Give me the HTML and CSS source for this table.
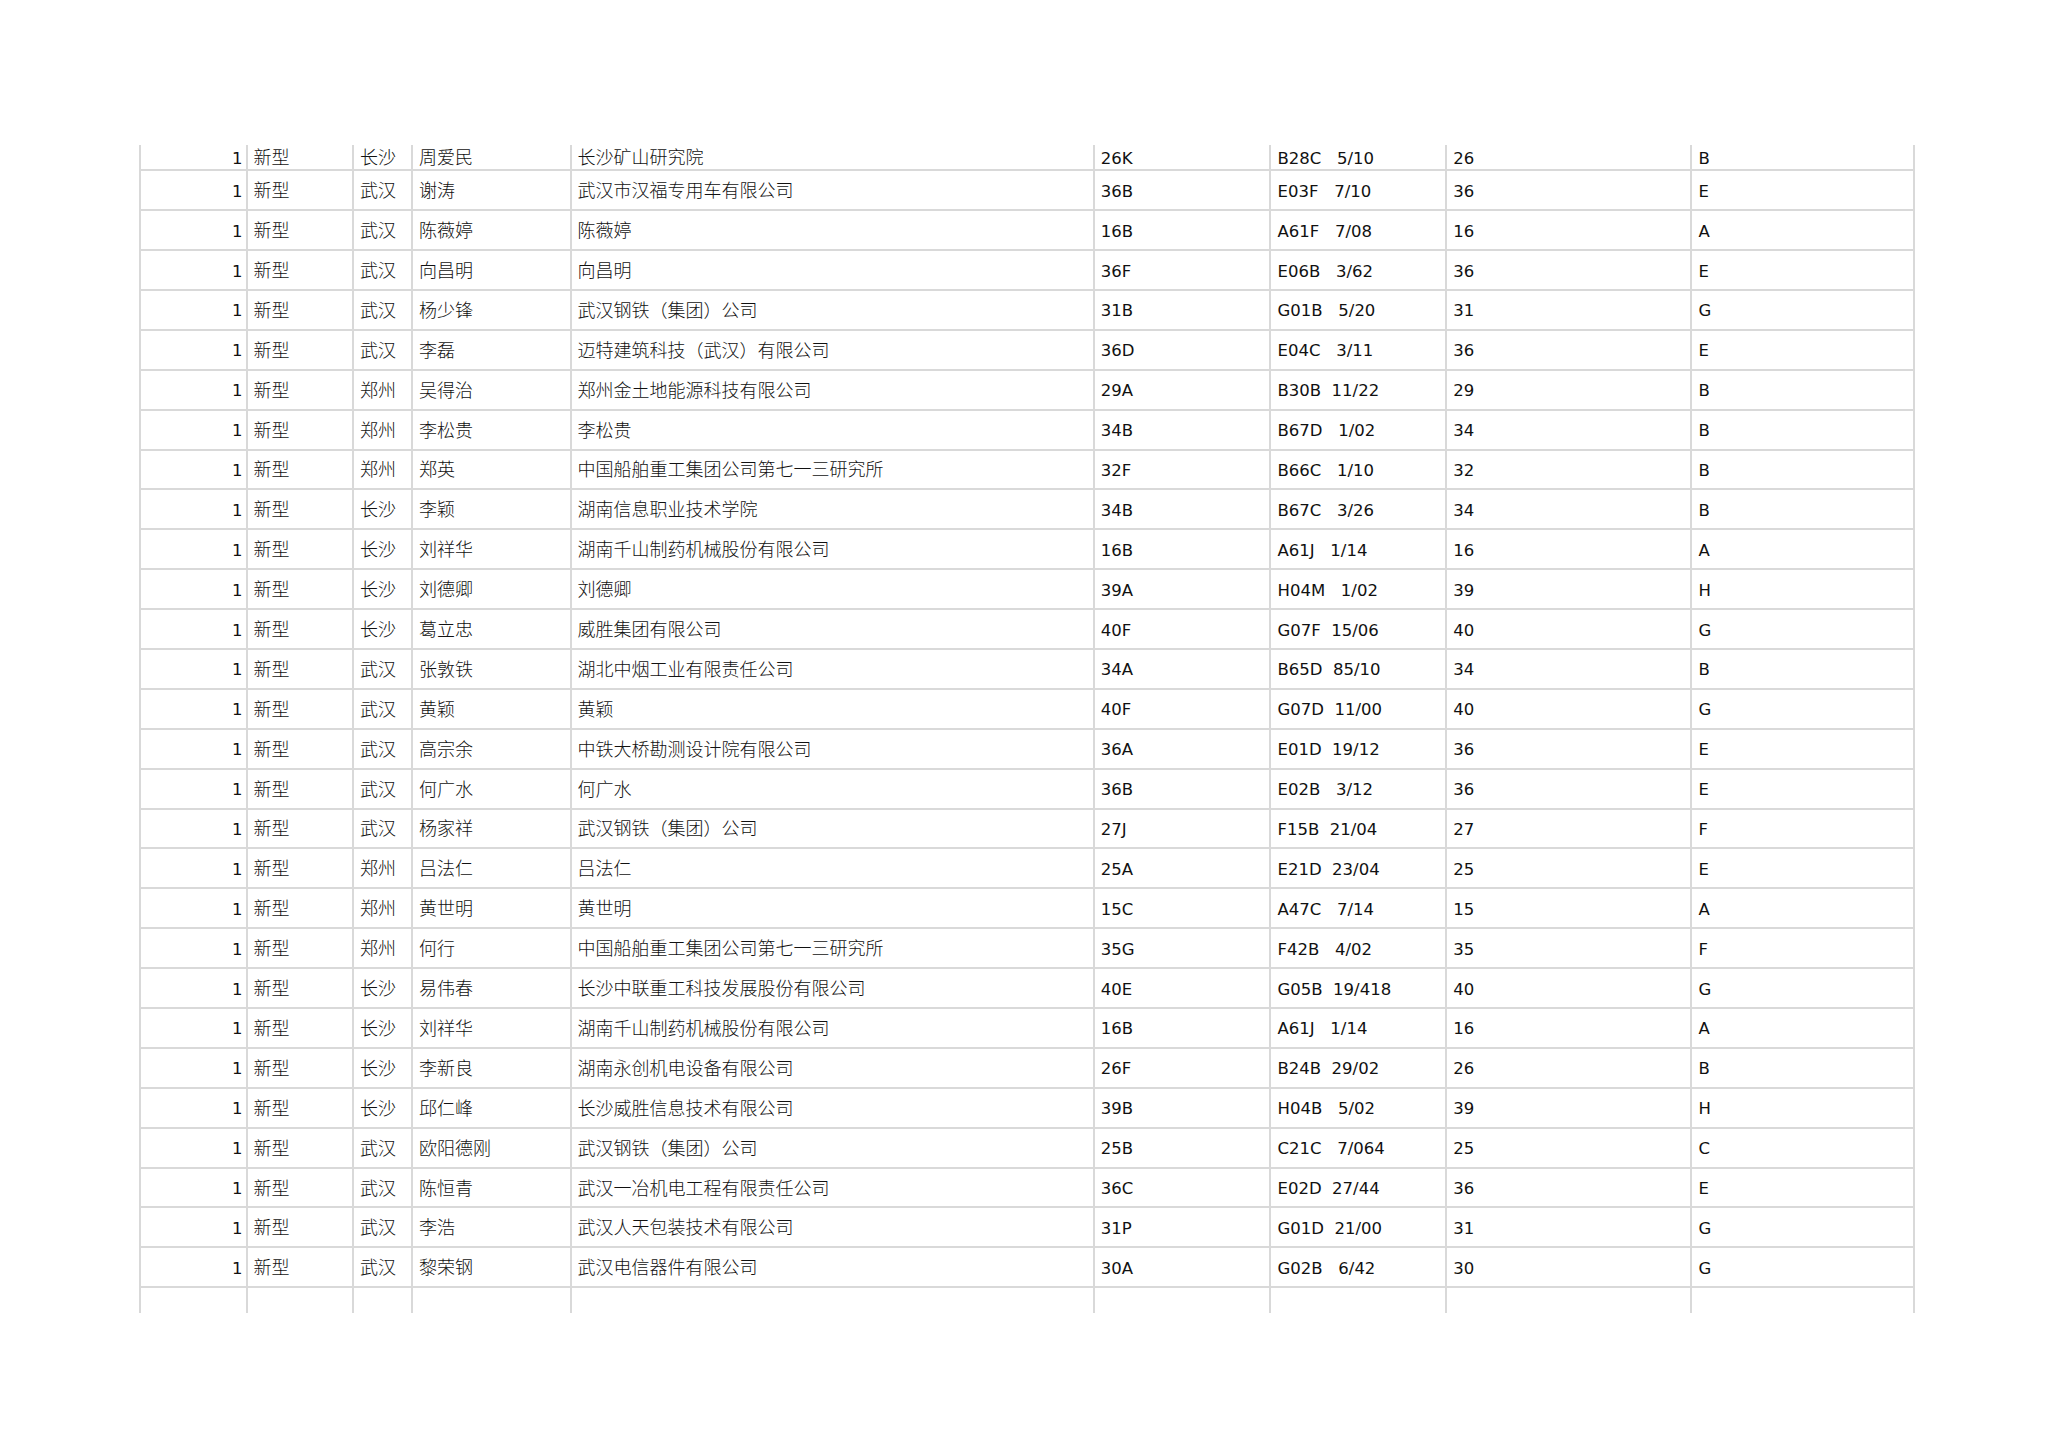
FILE: index.html
```html
<!DOCTYPE html>
<html lang="zh-CN">
<head>
<meta charset="utf-8">
<title>专利列表</title>
<link rel="stylesheet" href="styles.css">
</head>
<body>
<div class="sheet">
<table class="grid">
<colgroup>
<col class="c1"><col class="c2"><col class="c3"><col class="c4"><col class="c5"><col class="c6"><col class="c7"><col class="c8"><col class="c9">
</colgroup>
<tbody>
<tr class="first"><td class="n">1</td><td class="z">新型</td><td class="z">长沙</td><td class="z">周爱民</td><td class="z">长沙矿山研究院</td><td>26K</td><td>B28C   5/10</td><td>26</td><td>B</td></tr>
<tr><td class="n">1</td><td class="z">新型</td><td class="z">武汉</td><td class="z">谢涛</td><td class="z">武汉市汉福专用车有限公司</td><td>36B</td><td>E03F   7/10</td><td>36</td><td>E</td></tr>
<tr><td class="n">1</td><td class="z">新型</td><td class="z">武汉</td><td class="z">陈薇婷</td><td class="z">陈薇婷</td><td>16B</td><td>A61F   7/08</td><td>16</td><td>A</td></tr>
<tr><td class="n">1</td><td class="z">新型</td><td class="z">武汉</td><td class="z">向昌明</td><td class="z">向昌明</td><td>36F</td><td>E06B   3/62</td><td>36</td><td>E</td></tr>
<tr><td class="n">1</td><td class="z">新型</td><td class="z">武汉</td><td class="z">杨少锋</td><td class="z">武汉钢铁（集团）公司</td><td>31B</td><td>G01B   5/20</td><td>31</td><td>G</td></tr>
<tr><td class="n">1</td><td class="z">新型</td><td class="z">武汉</td><td class="z">李磊</td><td class="z">迈特建筑科技（武汉）有限公司</td><td>36D</td><td>E04C   3/11</td><td>36</td><td>E</td></tr>
<tr><td class="n">1</td><td class="z">新型</td><td class="z">郑州</td><td class="z">吴得治</td><td class="z">郑州金土地能源科技有限公司</td><td>29A</td><td>B30B  11/22</td><td>29</td><td>B</td></tr>
<tr><td class="n">1</td><td class="z">新型</td><td class="z">郑州</td><td class="z">李松贵</td><td class="z">李松贵</td><td>34B</td><td>B67D   1/02</td><td>34</td><td>B</td></tr>
<tr><td class="n">1</td><td class="z">新型</td><td class="z">郑州</td><td class="z">郑英</td><td class="z">中国船舶重工集团公司第七一三研究所</td><td>32F</td><td>B66C   1/10</td><td>32</td><td>B</td></tr>
<tr><td class="n">1</td><td class="z">新型</td><td class="z">长沙</td><td class="z">李颖</td><td class="z">湖南信息职业技术学院</td><td>34B</td><td>B67C   3/26</td><td>34</td><td>B</td></tr>
<tr><td class="n">1</td><td class="z">新型</td><td class="z">长沙</td><td class="z">刘祥华</td><td class="z">湖南千山制药机械股份有限公司</td><td>16B</td><td>A61J   1/14</td><td>16</td><td>A</td></tr>
<tr><td class="n">1</td><td class="z">新型</td><td class="z">长沙</td><td class="z">刘德卿</td><td class="z">刘德卿</td><td>39A</td><td>H04M   1/02</td><td>39</td><td>H</td></tr>
<tr><td class="n">1</td><td class="z">新型</td><td class="z">长沙</td><td class="z">葛立忠</td><td class="z">威胜集团有限公司</td><td>40F</td><td>G07F  15/06</td><td>40</td><td>G</td></tr>
<tr><td class="n">1</td><td class="z">新型</td><td class="z">武汉</td><td class="z">张敦铁</td><td class="z">湖北中烟工业有限责任公司</td><td>34A</td><td>B65D  85/10</td><td>34</td><td>B</td></tr>
<tr><td class="n">1</td><td class="z">新型</td><td class="z">武汉</td><td class="z">黄颖</td><td class="z">黄颖</td><td>40F</td><td>G07D  11/00</td><td>40</td><td>G</td></tr>
<tr><td class="n">1</td><td class="z">新型</td><td class="z">武汉</td><td class="z">高宗余</td><td class="z">中铁大桥勘测设计院有限公司</td><td>36A</td><td>E01D  19/12</td><td>36</td><td>E</td></tr>
<tr><td class="n">1</td><td class="z">新型</td><td class="z">武汉</td><td class="z">何广水</td><td class="z">何广水</td><td>36B</td><td>E02B   3/12</td><td>36</td><td>E</td></tr>
<tr><td class="n">1</td><td class="z">新型</td><td class="z">武汉</td><td class="z">杨家祥</td><td class="z">武汉钢铁（集团）公司</td><td>27J</td><td>F15B  21/04</td><td>27</td><td>F</td></tr>
<tr><td class="n">1</td><td class="z">新型</td><td class="z">郑州</td><td class="z">吕法仁</td><td class="z">吕法仁</td><td>25A</td><td>E21D  23/04</td><td>25</td><td>E</td></tr>
<tr><td class="n">1</td><td class="z">新型</td><td class="z">郑州</td><td class="z">黄世明</td><td class="z">黄世明</td><td>15C</td><td>A47C   7/14</td><td>15</td><td>A</td></tr>
<tr><td class="n">1</td><td class="z">新型</td><td class="z">郑州</td><td class="z">何行</td><td class="z">中国船舶重工集团公司第七一三研究所</td><td>35G</td><td>F42B   4/02</td><td>35</td><td>F</td></tr>
<tr><td class="n">1</td><td class="z">新型</td><td class="z">长沙</td><td class="z">易伟春</td><td class="z">长沙中联重工科技发展股份有限公司</td><td>40E</td><td>G05B  19/418</td><td>40</td><td>G</td></tr>
<tr><td class="n">1</td><td class="z">新型</td><td class="z">长沙</td><td class="z">刘祥华</td><td class="z">湖南千山制药机械股份有限公司</td><td>16B</td><td>A61J   1/14</td><td>16</td><td>A</td></tr>
<tr><td class="n">1</td><td class="z">新型</td><td class="z">长沙</td><td class="z">李新良</td><td class="z">湖南永创机电设备有限公司</td><td>26F</td><td>B24B  29/02</td><td>26</td><td>B</td></tr>
<tr><td class="n">1</td><td class="z">新型</td><td class="z">长沙</td><td class="z">邱仁峰</td><td class="z">长沙威胜信息技术有限公司</td><td>39B</td><td>H04B   5/02</td><td>39</td><td>H</td></tr>
<tr><td class="n">1</td><td class="z">新型</td><td class="z">武汉</td><td class="z">欧阳德刚</td><td class="z">武汉钢铁（集团）公司</td><td>25B</td><td>C21C   7/064</td><td>25</td><td>C</td></tr>
<tr><td class="n">1</td><td class="z">新型</td><td class="z">武汉</td><td class="z">陈恒青</td><td class="z">武汉一冶机电工程有限责任公司</td><td>36C</td><td>E02D  27/44</td><td>36</td><td>E</td></tr>
<tr><td class="n">1</td><td class="z">新型</td><td class="z">武汉</td><td class="z">李浩</td><td class="z">武汉人天包装技术有限公司</td><td>31P</td><td>G01D  21/00</td><td>31</td><td>G</td></tr>
<tr><td class="n">1</td><td class="z">新型</td><td class="z">武汉</td><td class="z">黎荣钢</td><td class="z">武汉电信器件有限公司</td><td>30A</td><td>G02B   6/42</td><td>30</td><td>G</td></tr>
<tr class="last"><td></td><td></td><td></td><td></td><td></td><td></td><td></td><td></td><td></td></tr>
</tbody>
</table>
</div>
</body>
</html>
```

FILE: styles.css
```css
html, body {
  margin: 0;
  padding: 0;
  background: #ffffff;
}

.sheet {
  padding: 145px 0 0 139px;
}

.grid {
  border-collapse: separate;
  border-spacing: 0;
  table-layout: fixed;
  width: 1775.8px;
}

.c1 { width: 106.5px; }
.c2 { width: 106.5px; }
.c3 { width: 59px; }
.c4 { width: 158.5px; }
.c5 { width: 523.3px; }
.c6 { width: 176.7px; }
.c7 { width: 175.7px; }
.c8 { width: 245.3px; }
.c9 { width: 224.3px; }

.grid tr {
  height: 39.9px;
}

.grid tr.first {
  height: 26.3px;
}

.grid tr.last {
  height: 25px;
}

.grid td {
  box-sizing: border-box;
  border-left: 2px solid #d9d9d9;
  border-bottom: 2px solid #d9d9d9;
  padding: 3px 2px 0 6px;
  vertical-align: middle;
  white-space: pre;
  font-family: "DejaVu Sans", "Liberation Sans", sans-serif;
  font-size: 16.5px;
  line-height: 20px;
  color: #111111;
}

.grid td:last-child {
  border-right: 2px solid #d9d9d9;
}

.grid tr.last td {
  border-bottom: none;
}

.grid td.n {
  text-align: right;
  padding-right: 3px;
}

.grid td.z {
  font-family: "Noto Sans CJK SC", "Noto Sans", sans-serif;
  font-size: 18px;
  font-weight: 300;
  padding-top: 0;
  padding-bottom: 2px;
  padding-left: 6px;
}
```
